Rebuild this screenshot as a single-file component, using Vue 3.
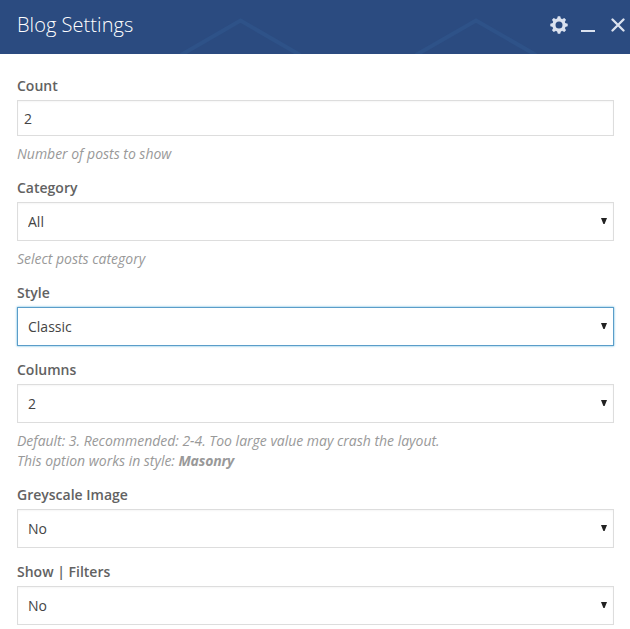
<script setup>
import { ref } from 'vue'

const fields = ref([
  { id: 'count', label: 'Count', type: 'text', value: '2', hint: [{ text: 'Number of posts to show' }] },
  { id: 'category', label: 'Category', type: 'select', value: 'All', hint: [{ text: 'Select posts category' }] },
  { id: 'style', label: 'Style', type: 'select', value: 'Classic', active: true },
  {
    id: 'columns',
    label: 'Columns',
    type: 'select',
    value: '2',
    hint: [
      { text: 'Default: 3. Recommended: 2-4. Too large value may crash the layout.' },
      { text: 'This option works in style: ', strong: 'Masonry' },
    ],
  },
  { id: 'greyscale', label: 'Greyscale Image', type: 'select', value: 'No' },
  { id: 'filters', label: 'Show | Filters', type: 'select', value: 'No' },
])
const teeth = [0, 45, 90, 135, 180, 225, 270, 315]
</script>

<template>
  <div class="panel">
    <header class="header">
      <svg class="pattern" width="630" height="54" viewBox="0 0 630 54" fill="none">
        <path d="M181 55L240.500 20.500L300 55M416 55L476 20.500L536 55" stroke="#2e5288" stroke-width="4" />
      </svg>
      <h1 class="title">Blog Settings</h1>
      <div class="actions">
        <svg class="gear" width="18" height="18" viewBox="-9 -9 18 18">
          <circle r="5.100" fill="none" stroke="#dbe2ef" stroke-width="3.200" />
          <path v-for="a in teeth" :key="a" :transform="`rotate(${a})`" d="M-2 -6L-1.200 -8.700H1.200L2 -6Z" fill="#dbe2ef" />
        </svg>
        <span class="minimize"></span>
        <svg class="close" width="14" height="14" viewBox="0 0 14 14">
          <path d="M1.500 1.500L12.500 12.500M12.500 1.500L1.500 12.500" stroke="#dbe2ef" stroke-width="2.300" stroke-linecap="round" />
        </svg>
      </div>
    </header>

    <main class="form">
      <section v-for="f in fields" :key="f.id" class="field">
        <label class="label" :for="f.id">{{ f.label }}</label>
        <input v-if="f.type === 'text'" :id="f.id" v-model="f.value" class="input" type="text" />
        <div v-else class="select-box" :class="{ active: f.active }">
          <select :id="f.id" v-model="f.value" class="select">
            <option>{{ f.value }}</option>
          </select>
          <svg class="arrow" width="6" height="6" viewBox="0 0 6 6">
            <path d="M0 0H6L3.600 6H2.400Z" fill="#222" />
          </svg>
        </div>
        <div v-if="f.hint" class="hint">
          <div v-for="(line, i) in f.hint" :key="i">{{ line.text }}<strong v-if="line.strong">{{ line.strong }}</strong></div>
        </div>
      </section>
    </main>
  </div>
</template>

<style>
body {
  background: #fff;
  overflow: hidden;
}
</style>

<style scoped>
.panel {
  height: 629px;
  overflow: hidden;
  font-family: "Open Sans", sans-serif;
  font-size: 14px;
  line-height: 20px;
}
.header {
  position: relative;
  display: flex;
  justify-content: space-between;
  height: 54px;
  padding: 0 5px 0 17px;
  box-sizing: border-box;
  background: #2b4b80;
}
.pattern {
  position: absolute;
  left: 0;
  top: 0;
}
.title {
  position: relative;
  margin: 0;
  font-size: 20px;
  font-weight: 300;
  line-height: 50px;
  letter-spacing: 0.05px;
  color: #fff;
}
.actions {
  position: relative;
  display: flex;
  align-items: flex-start;
}
.gear {
  margin: 16px 13px 0 0;
}
.minimize {
  width: 14px;
  height: 2px;
  margin: 30px 16px 0 0;
  background: #dbe2ef;
}
.close {
  margin-top: 18px;
}
.form {
  display: flex;
  flex-direction: column;
  gap: 14px;
  padding: 22px 16px 0 17px;
}
.field {
  display: flex;
  flex-direction: column;
}
.label {
  margin-bottom: 4px;
  font-weight: 600;
  color: #626262;
}
.input,
.select-box {
  box-sizing: border-box;
  border: 1px solid #ddd;
  background: #fff;
  box-shadow: inset 0 1px 2px rgba(0, 0, 0, 0.04);
}
.input {
  height: 36px;
  margin: 0;
  padding: 1px 6px 0;
  border-radius: 0;
  outline: none;
  font: inherit;
  color: #444;
}
.select-box {
  display: flex;
  align-items: center;
  height: 39px;
  padding: 0 6px 0 10px;
}
.select-box.active {
  border-color: #5b9dc9;
  box-shadow: 0 0 2px rgba(30, 150, 210, 0.75);
}
.select {
  flex: 1;
  height: 37px;
  margin: 0;
  padding: 1px 0 0;
  border: 0;
  outline: none;
  appearance: none;
  background: transparent;
  font: inherit;
  color: #444;
}
.arrow {
  margin-bottom: 2px;
}
.hint {
  margin-top: 8px;
  font-style: italic;
  letter-spacing: -0.015px;
  color: #999;
}
.hint strong {
  font-weight: 700;
  letter-spacing: -0.2px;
}
</style>
